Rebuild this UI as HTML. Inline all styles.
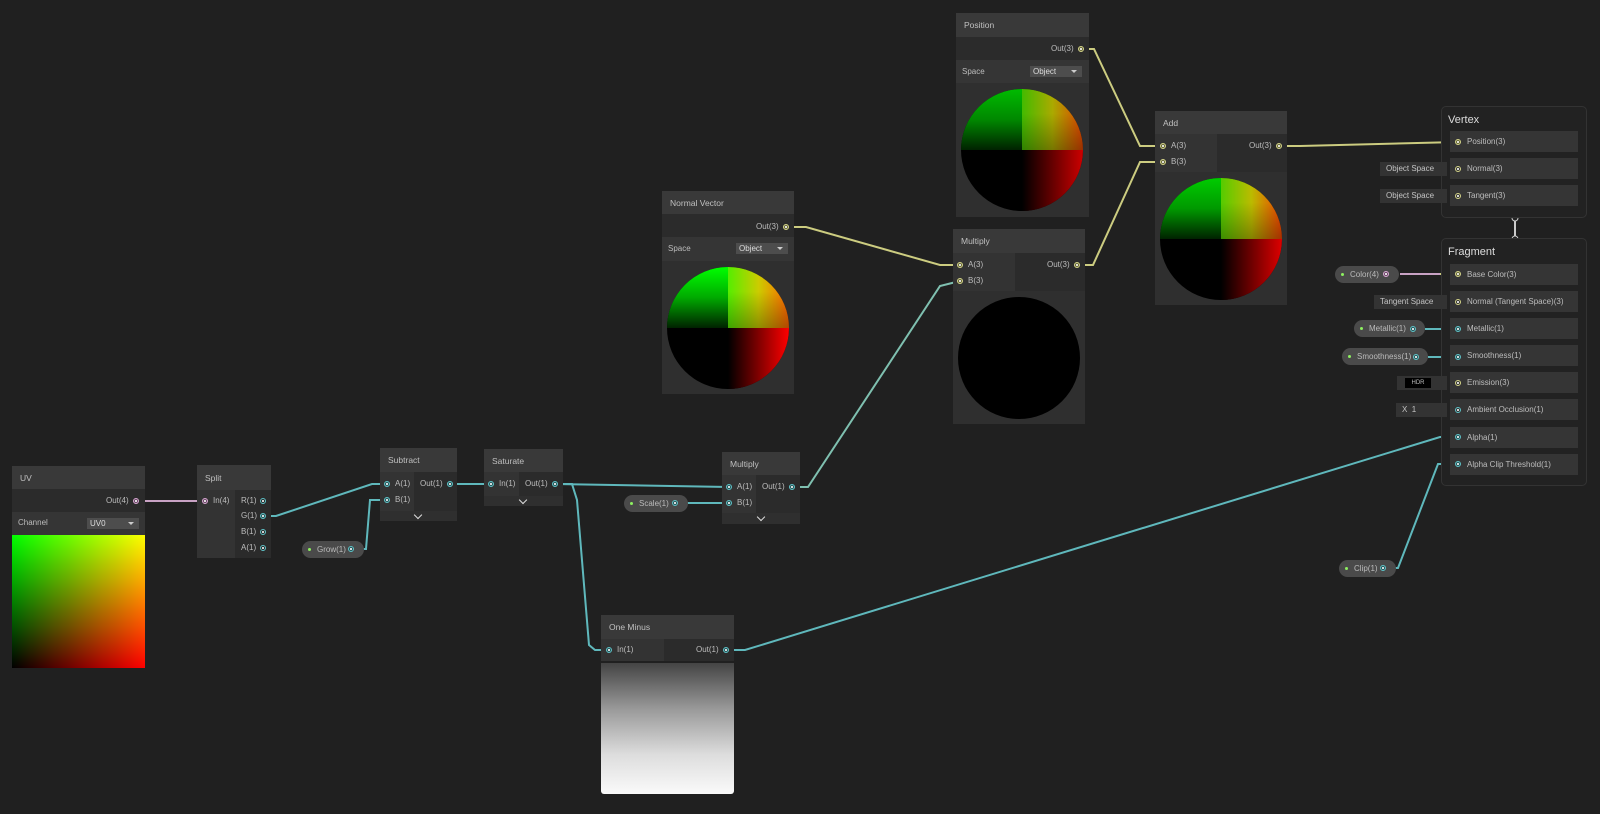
<!DOCTYPE html>
<html><head><meta charset="utf-8"><style>
*{margin:0;padding:0;box-sizing:border-box}
body{width:1600px;height:814px;background:#202020;position:relative;overflow:hidden;font-family:"Liberation Sans",sans-serif;font-size:8px;color:#bdbdbd}
.a{position:absolute}
.hd{position:absolute;background:#393939;color:#c0c0c0;font-size:8.5px;padding-left:8px;display:flex;align-items:center}
.lc{position:absolute;background:#333}
.rc{position:absolute;background:#2b2b2b}
.bar{position:absolute;background:#2f2f2f}
.t{position:absolute;font-size:8px;color:#bdbdbd;line-height:10px;white-space:nowrap}
.p{position:absolute;width:6px;height:6px;border-radius:50%;border:1px solid;margin:-3px 0 0 -3px}
.p:after{content:"";position:absolute;left:1px;top:1px;width:2px;height:2px;background:#fff;opacity:.8}
.pc{border-color:#5fc3c8;background:#2a5558}
.py{border-color:#d4d489;background:#66663a}
.pp{border-color:#d8a8d2;background:#6a4a66}
.pill{position:absolute;background:#4a4a4a;border-radius:9px;height:17px;font-size:8px;color:#bbb;display:flex;align-items:center}
.g{position:absolute;width:3px;height:3px;border-radius:50%;background:#8df060}
.dd{position:absolute;background:#4d4d4d;color:#ddd;font-size:8px;padding-left:3px;line-height:11px;height:11px}
.dd:after{content:"";position:absolute;right:5px;top:4px;border:3px solid transparent;border-top:3px solid #ccc}
.circ{position:absolute;width:122px;height:122px;border-radius:50%;overflow:hidden;background:#000}
.q{position:absolute;width:61px;height:61px}
.row{position:absolute;background:#353535;height:21px;font-size:8px;color:#bdbdbd;padding-left:17px;line-height:21px;width:128px;left:1450px}
.box{position:absolute;border:1px solid #333;border-radius:5px;background:#222}
.chev{position:absolute;width:6px;height:6px;border-right:1.5px solid #ddd;border-bottom:1.5px solid #ddd;transform:rotate(45deg)}
.os{position:absolute;background:#333;color:#c4c4c4;font-size:8px;height:14px;line-height:14px;padding-left:6px}
</style></head><body>

<svg class="a" style="left:0;top:0" width="1600" height="814">
<g fill="none" stroke-width="2">
<polyline stroke="#c9a2c4" points="136,501 205,501"/>
<polyline stroke="#5fb8bc" points="263,516 276,516 372,484 387,484"/>
<polyline stroke="#5fb8bc" points="351,549 366,549 370,500 387,500"/>
<polyline stroke="#5fb8bc" points="450,484 491,484"/>
<polyline stroke="#5fb8bc" points="555,484 729,487"/>
<polyline stroke="#5fb8bc" points="555,484 572,484 577,500 589,645 595,650 609,650"/>
<polyline stroke="#5fb8bc" points="675,503 729,503"/>
<polyline stroke="#7fc0b0" points="792,487 808,487 940,286 960,281"/>
<polyline stroke="#cccc80" points="786,227 806,227 940,265 960,265"/>
<polyline stroke="#cccc80" points="1081,49 1094,49 1140,146 1162,146"/>
<polyline stroke="#cccc80" points="1077,265 1093,265 1140,162 1162,162"/>
<polyline stroke="#cccc80" points="1279,146 1300,146 1458,142"/>
<polyline stroke="#5fb8bc" points="726,650 745,650 1440,437 1458,437"/>
<polyline stroke="#5fb8bc" points="1383,568 1398,568 1438,464 1458,464"/>
<polyline stroke="#c9a2c4" points="1400,274 1440,274"/>
<polyline stroke="#cccc80" points="1440,274 1458,274"/>
<polyline stroke="#5fb8bc" points="1425,329 1458,329"/>
<polyline stroke="#5fb8bc" points="1428,357 1458,357"/>
<polyline stroke="#cccc80" points="1447,169 1458,169"/><polyline stroke="#cccc80" points="1447,196 1458,196"/>
<polyline stroke="#cccc80" points="1447,302 1458,302"/><polyline stroke="#cccc80" points="1447,383 1458,383"/>
<polyline stroke="#5fb8bc" points="1447,410 1458,410"/>
<line stroke="#ccc" x1="1515" y1="218" x2="1515" y2="239"/>
</g>
<circle cx="1515" cy="218" r="3" fill="#222" stroke="#ccc"/><circle cx="1515" cy="239" r="3" fill="#222" stroke="#ccc"/>
</svg>

<!-- UV -->
<div class="hd" style="left:12px;top:466px;width:133px;height:23px">UV</div>
<div class="rc" style="left:12px;top:489px;width:133px;height:23px"></div>
<div class="t" style="left:106px;top:496px">Out(4)</div><div class="p pp" style="left:136px;top:501px"></div>
<div class="bar" style="left:12px;top:512px;width:133px;height:23px;background:#353535"></div>
<div class="t" style="left:18px;top:518px">Channel</div>
<div class="dd" style="left:87px;top:518px;width:52px">UV0</div>
<div class="a" style="left:12px;top:535px;width:133px;height:133px;background:linear-gradient(to top,#000,#0f0),linear-gradient(to right,#000,#f00);background-blend-mode:screen"></div>

<!-- Split -->
<div class="hd" style="left:197px;top:465px;width:74px;height:25px">Split</div>
<div class="lc" style="left:197px;top:490px;width:38px;height:68px"></div>
<div class="rc" style="left:235px;top:490px;width:36px;height:68px"></div>
<div class="p pp" style="left:205px;top:501px"></div><div class="t" style="left:213px;top:496px">In(4)</div>
<div class="t" style="left:241px;top:496px">R(1)</div><div class="p pc" style="left:263px;top:501px;background:none"></div>
<div class="t" style="left:241px;top:511px">G(1)</div><div class="p pc" style="left:263px;top:516px"></div>
<div class="t" style="left:241px;top:527px">B(1)</div><div class="p pc" style="left:263px;top:532px;background:none"></div>
<div class="t" style="left:241px;top:543px">A(1)</div><div class="p pc" style="left:263px;top:548px;background:none"></div>

<!-- Subtract -->
<div class="hd" style="left:380px;top:448px;width:77px;height:24px">Subtract</div>
<div class="lc" style="left:380px;top:472px;width:34px;height:39px"></div>
<div class="rc" style="left:414px;top:472px;width:43px;height:39px"></div>
<div class="bar" style="left:380px;top:511px;width:77px;height:10px"></div><div class="chev" style="left:415px;top:512px"></div>
<div class="p pc" style="left:387px;top:484px"></div><div class="t" style="left:395px;top:479px">A(1)</div>
<div class="p pc" style="left:387px;top:500px"></div><div class="t" style="left:395px;top:495px">B(1)</div>
<div class="t" style="left:420px;top:479px">Out(1)</div><div class="p pc" style="left:450px;top:484px"></div>

<!-- Saturate -->
<div class="hd" style="left:484px;top:449px;width:79px;height:23px">Saturate</div>
<div class="lc" style="left:484px;top:472px;width:35px;height:24px"></div>
<div class="rc" style="left:519px;top:472px;width:44px;height:24px"></div>
<div class="bar" style="left:484px;top:496px;width:79px;height:10px"></div><div class="chev" style="left:520px;top:497px"></div>
<div class="p pc" style="left:491px;top:484px"></div><div class="t" style="left:499px;top:479px">In(1)</div>
<div class="t" style="left:525px;top:479px">Out(1)</div><div class="p pc" style="left:555px;top:484px"></div>

<!-- Grow -->
<div class="pill" style="left:302px;top:541px;width:62px;padding-left:15px">Grow(1)</div><div class="g" style="left:308px;top:548px"></div><div class="p pc" style="left:351px;top:549px"></div>

<!-- Multiply 1 -->
<div class="hd" style="left:722px;top:452px;width:78px;height:23px">Multiply</div>
<div class="lc" style="left:722px;top:475px;width:34px;height:38px"></div>
<div class="rc" style="left:756px;top:475px;width:44px;height:38px"></div>
<div class="bar" style="left:722px;top:513px;width:78px;height:11px"></div><div class="chev" style="left:758px;top:514px"></div>
<div class="p pc" style="left:729px;top:487px"></div><div class="t" style="left:737px;top:482px">A(1)</div>
<div class="p pc" style="left:729px;top:503px"></div><div class="t" style="left:737px;top:498px">B(1)</div>
<div class="t" style="left:762px;top:482px">Out(1)</div><div class="p pc" style="left:792px;top:487px"></div>
<div class="pill" style="left:624px;top:495px;width:64px;padding-left:15px">Scale(1)</div><div class="g" style="left:630px;top:502px"></div><div class="p pc" style="left:675px;top:503px"></div>

<!-- One Minus -->
<div class="hd" style="left:601px;top:615px;width:133px;height:24px">One Minus</div>
<div class="lc" style="left:601px;top:639px;width:63px;height:22px"></div>
<div class="rc" style="left:664px;top:639px;width:70px;height:22px"></div>
<div class="p pc" style="left:609px;top:650px"></div><div class="t" style="left:617px;top:645px">In(1)</div>
<div class="t" style="left:696px;top:645px">Out(1)</div><div class="p pc" style="left:726px;top:650px"></div>
<div class="a" style="left:601px;top:663px;width:133px;height:131px;background:linear-gradient(#444,#999 35%,#ddd 70%,#fafafa);border-radius:0 0 3px 3px"></div>

<!-- Normal Vector -->
<div class="hd" style="left:662px;top:191px;width:132px;height:23px">Normal Vector</div>
<div class="rc" style="left:662px;top:214px;width:132px;height:23px"></div>
<div class="t" style="left:756px;top:222px">Out(3)</div><div class="p py" style="left:786px;top:227px"></div>
<div class="bar" style="left:662px;top:237px;width:132px;height:24px;background:#353535"></div>
<div class="t" style="left:668px;top:244px">Space</div><div class="dd" style="left:736px;top:243px;width:52px">Object</div>
<div class="a" style="left:662px;top:261px;width:132px;height:133px;background:#2f2f2f"></div>
<div class="circ" style="left:667px;top:267px">
<div class="q" style="left:0;top:0;background:linear-gradient(#0f0,#0a0 50%,#020)"></div>
<div class="q" style="left:61px;top:0;background:linear-gradient(transparent 40%,rgba(0,0,0,.3)),linear-gradient(to right,#5e0,#cc0 50%,#f60)"></div>
<div class="q" style="left:61px;top:61px;background:linear-gradient(to right,#000,#f00)"></div>
</div>

<!-- Position -->
<div class="hd" style="left:956px;top:13px;width:133px;height:24px">Position</div>
<div class="rc" style="left:956px;top:37px;width:133px;height:23px"></div>
<div class="t" style="left:1051px;top:44px">Out(3)</div><div class="p py" style="left:1081px;top:49px"></div>
<div class="bar" style="left:956px;top:60px;width:133px;height:23px;background:#353535"></div>
<div class="t" style="left:962px;top:67px">Space</div><div class="dd" style="left:1030px;top:66px;width:52px">Object</div>
<div class="a" style="left:956px;top:83px;width:133px;height:134px;background:#2f2f2f"></div>
<div class="circ" style="left:961px;top:89px">
<div class="q" style="left:0;top:0;background:linear-gradient(#0b0,#080 50%,#020)"></div>
<div class="q" style="left:61px;top:0;background:linear-gradient(transparent 40%,rgba(0,0,0,.3)),linear-gradient(to right,#4b0,#aa0 50%,#d40)"></div>
<div class="q" style="left:61px;top:61px;background:linear-gradient(to right,#000,#c00)"></div>
</div>

<!-- Multiply 3 -->
<div class="hd" style="left:953px;top:229px;width:132px;height:24px">Multiply</div>
<div class="lc" style="left:953px;top:253px;width:62px;height:38px"></div>
<div class="rc" style="left:1015px;top:253px;width:70px;height:38px"></div>
<div class="p py" style="left:960px;top:265px"></div><div class="t" style="left:968px;top:260px">A(3)</div>
<div class="p py" style="left:960px;top:281px"></div><div class="t" style="left:968px;top:276px">B(3)</div>
<div class="t" style="left:1047px;top:260px">Out(3)</div><div class="p py" style="left:1077px;top:265px"></div>
<div class="a" style="left:953px;top:291px;width:132px;height:133px;background:#2f2f2f"></div>
<div class="circ" style="left:958px;top:297px"></div>

<!-- Add -->
<div class="hd" style="left:1155px;top:111px;width:132px;height:23px">Add</div>
<div class="lc" style="left:1155px;top:134px;width:62px;height:38px"></div>
<div class="rc" style="left:1217px;top:134px;width:70px;height:38px"></div>
<div class="p py" style="left:1163px;top:146px"></div><div class="t" style="left:1171px;top:141px">A(3)</div>
<div class="p py" style="left:1163px;top:162px"></div><div class="t" style="left:1171px;top:157px">B(3)</div>
<div class="t" style="left:1249px;top:141px">Out(3)</div><div class="p py" style="left:1279px;top:146px"></div>
<div class="a" style="left:1155px;top:172px;width:132px;height:133px;background:#2f2f2f"></div>
<div class="circ" style="left:1160px;top:178px">
<div class="q" style="left:0;top:0;background:linear-gradient(#0c0,#090 50%,#020)"></div>
<div class="q" style="left:61px;top:0;background:linear-gradient(transparent 40%,rgba(0,0,0,.3)),linear-gradient(to right,#5c0,#bb0 50%,#e40)"></div>
<div class="q" style="left:61px;top:61px;background:linear-gradient(to right,#000,#d00)"></div>
</div>

<!-- Master -->
<div class="box" style="left:1441px;top:106px;width:146px;height:112px"></div>
<div class="t" style="left:1448px;top:114px;font-size:11px;line-height:12px;color:#ddd">Vertex</div>
<div class="row" style="top:131px">Position(3)</div><div class="p py" style="left:1458px;top:142px"></div>
<div class="row" style="top:158px">Normal(3)</div><div class="p py" style="left:1458px;top:169px;background:none"></div>
<div class="row" style="top:185px">Tangent(3)</div><div class="p py" style="left:1458px;top:196px;background:none"></div>
<div class="os" style="left:1380px;top:162px;width:67px">Object Space</div>
<div class="os" style="left:1380px;top:189px;width:67px">Object Space</div>

<div class="box" style="left:1441px;top:238px;width:146px;height:248px"></div>
<div class="t" style="left:1448px;top:246px;font-size:11px;line-height:12px;color:#ddd">Fragment</div>
<div class="row" style="top:264px">Base Color(3)</div><div class="p py" style="left:1458px;top:274px"></div>
<div class="row" style="top:291px">Normal (Tangent Space)(3)</div><div class="p py" style="left:1458px;top:302px;background:none"></div>
<div class="row" style="top:318px">Metallic(1)</div><div class="p pc" style="left:1458px;top:329px"></div>
<div class="row" style="top:345px">Smoothness(1)</div><div class="p pc" style="left:1458px;top:357px"></div>
<div class="row" style="top:372px">Emission(3)</div><div class="p py" style="left:1458px;top:383px;background:none"></div>
<div class="row" style="top:399px">Ambient Occlusion(1)</div><div class="p pc" style="left:1458px;top:410px;background:none"></div>
<div class="row" style="top:427px">Alpha(1)</div><div class="p pc" style="left:1458px;top:437px"></div>
<div class="row" style="top:454px">Alpha Clip Threshold(1)</div><div class="p pc" style="left:1458px;top:464px"></div>

<div class="pill" style="left:1335px;top:266px;width:64px;padding-left:15px">Color(4)</div><div class="g" style="left:1341px;top:273px"></div><div class="p pp" style="left:1386px;top:274px"></div>
<div class="os" style="left:1374px;top:295px;width:73px">Tangent Space</div>
<div class="pill" style="left:1354px;top:320px;width:71px;padding-left:15px">Metallic(1)</div><div class="g" style="left:1360px;top:327px"></div><div class="p pc" style="left:1413px;top:329px"></div>
<div class="pill" style="left:1342px;top:348px;width:86px;padding-left:15px">Smoothness(1)</div><div class="g" style="left:1348px;top:355px"></div><div class="p pc" style="left:1416px;top:357px"></div>
<div class="os" style="left:1397px;top:376px;width:50px"></div><div class="a" style="left:1405px;top:378px;width:26px;height:10px;background:#000;color:#bbb;font-size:6px;text-align:center;line-height:10px">HDR</div>
<div class="os" style="left:1396px;top:403px;width:51px">X&nbsp; 1</div>
<div class="pill" style="left:1339px;top:560px;width:57px;padding-left:15px">Clip(1)</div><div class="g" style="left:1345px;top:567px"></div><div class="p pc" style="left:1383px;top:568px"></div>
</body></html>
